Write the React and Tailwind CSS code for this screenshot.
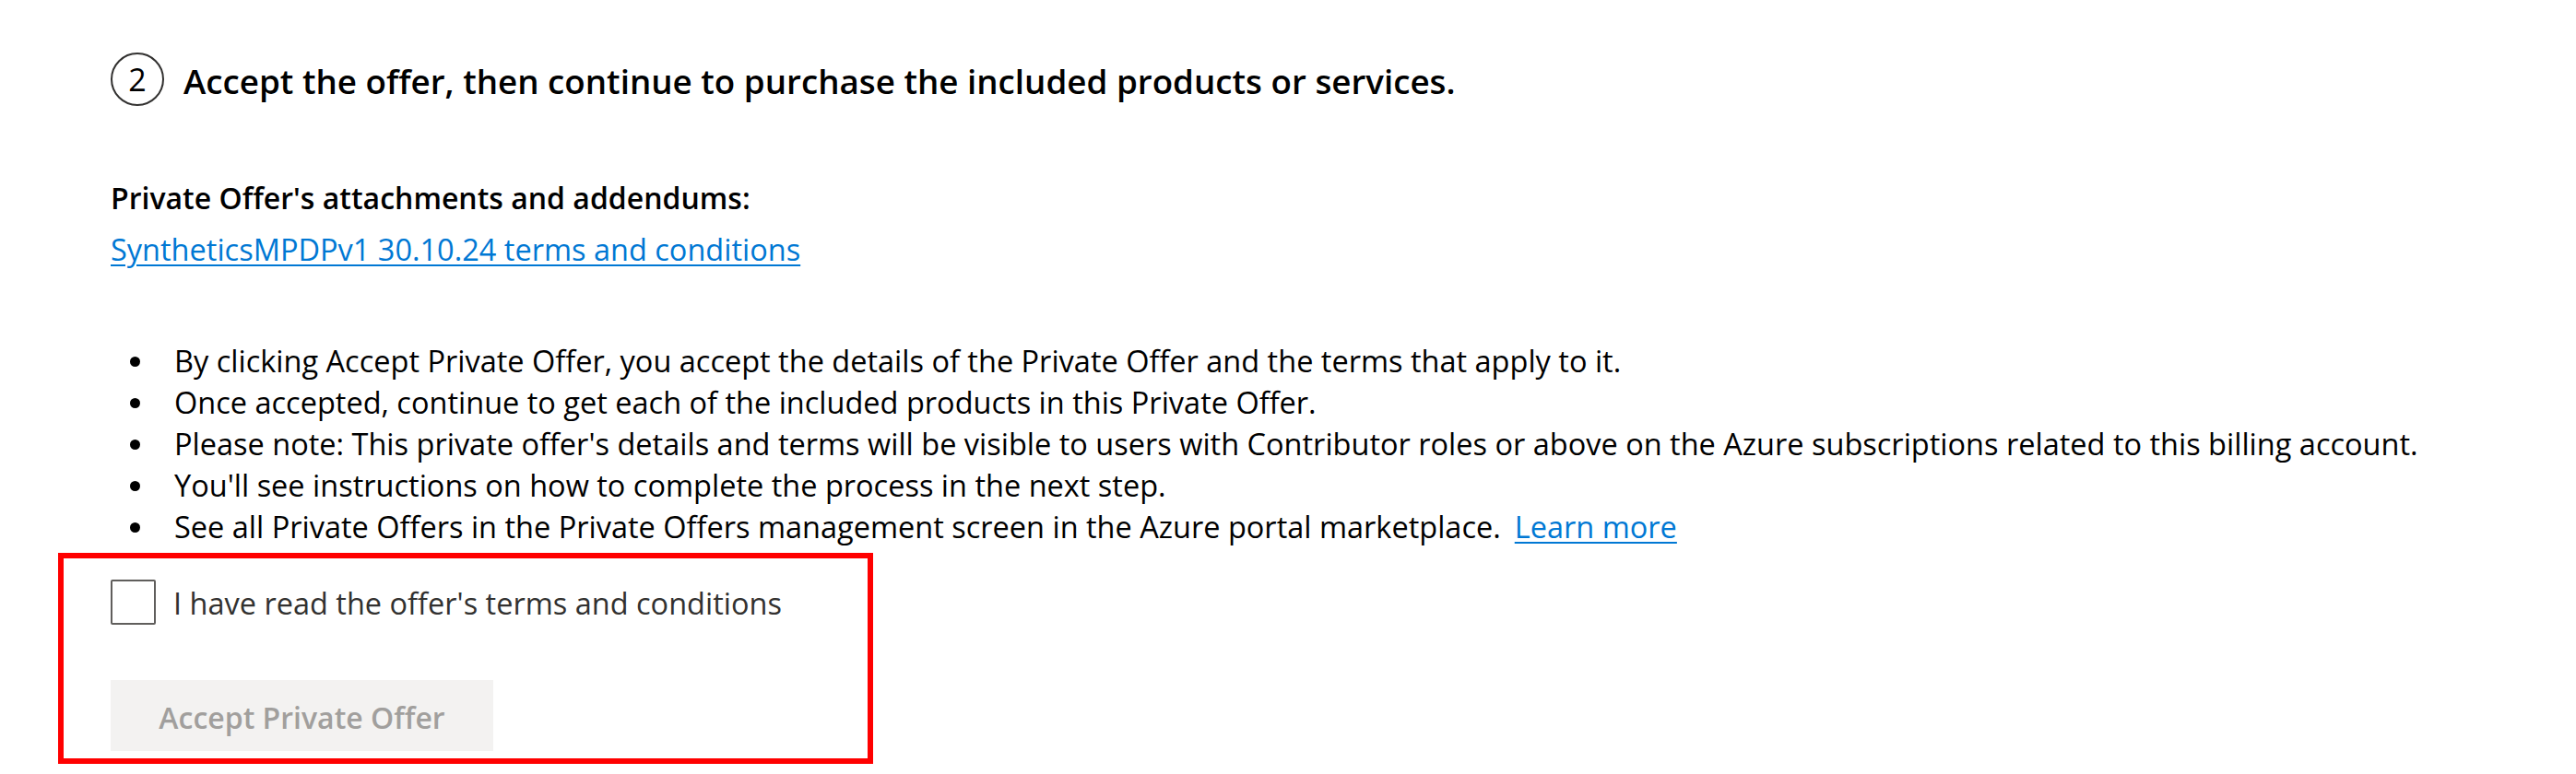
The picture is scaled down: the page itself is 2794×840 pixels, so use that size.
export default function App() {
  const bullets = [
    "By clicking Accept Private Offer, you accept the details of the Private Offer and the terms that apply to it.",
    "Once accepted, continue to get each of the included products in this Private Offer.",
    "Please note: This private offer's details and terms will be visible to users with Contributor roles or above on the Azure subscriptions related to this billing account.",
    "You'll see instructions on how to complete the process in the next step.",
  ];
  const Dot = () => (
    <span className="flex w-[69px] shrink-0">
      <span className="ml-[21px] mt-[18px] h-[11px] w-[11px] rounded-full bg-black" />
    </span>
  );
  return (
    <div className="min-h-[840px] w-full bg-white font-['Open_Sans',sans-serif] text-black">
      <div className="pt-[57px]">
        <div className="flex items-start pl-[120px]">
          <div className="flex h-[58px] w-[58px] shrink-0 items-center justify-center rounded-full border-2 border-[#323130] text-[34px] leading-none">
            2
          </div>
          <h2 className="ml-[21px] mt-[2px] whitespace-nowrap text-[36.75px] font-semibold leading-[58px]">
            Accept the offer, then continue to purchase the included products or services.
          </h2>
        </div>

        <div className="mt-[78px] pl-[120px] text-[32px] font-semibold leading-[40px]">
          Private Offer's attachments and addendums:
        </div>
        <div className="mt-[16px] pl-[120px] text-[32.5px] leading-[40px]">
          <a href="#" className="text-[#0078d4] underline decoration-[2px] underline-offset-[4px]">
            SyntheticsMPDPv1 30.10.24 terms and conditions
          </a>
        </div>

        <ul className="mt-[78px] pl-[120px] text-[32.5px] leading-[45px]">
          {bullets.map((b, i) => (
            <li key={i} className="flex items-start">
              <Dot />
              <span className="whitespace-nowrap">{b}</span>
            </li>
          ))}
          <li className="flex items-start">
            <Dot />
            <span className="whitespace-nowrap">
              See all Private Offers in the Private Offers management screen in the Azure portal marketplace.
              <a href="#" className="ml-[15px] text-[#0078d4] underline decoration-[2px] underline-offset-[4px]">
                Learn more
              </a>
            </span>
          </li>
        </ul>

        <div className="ml-[63px] mt-[6px] w-[884px] border-[6px] border-[#ff0000] pb-[8px] pl-[51px] pt-[23px]">
          <label className="flex items-start">
            <span className="h-[49px] w-[49px] shrink-0 rounded-[2px] border-2 border-[#605e5c] bg-white" />
            <span className="ml-[19px] mt-[6px] whitespace-nowrap text-[32.5px] leading-[40px] text-[#323130]">
              I have read the offer's terms and conditions
            </span>
          </label>
          <button
            type="button"
            disabled
            className="mt-[60px] flex h-[77px] w-[415px] items-center justify-center bg-[#f3f2f1] pt-[4px] text-[32px] font-semibold leading-[40px] text-[#a19f9d]"
          >
            Accept Private Offer
          </button>
        </div>
      </div>
    </div>
  );
}
